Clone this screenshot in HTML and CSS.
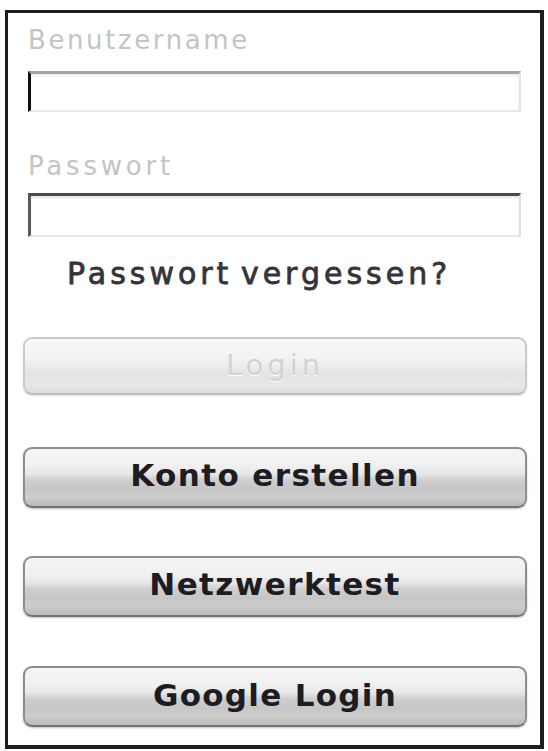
FILE: index.html
```html
<!DOCTYPE html>
<html lang="de">
<head>
<meta charset="utf-8">
<title>Login</title>
<link rel="stylesheet" href="styles.css">
</head>
<body>
<div class="panel">
  <div class="label">Benutzername</div>
  <input class="field field-user" type="text">
  <div class="label label-pass">Passwort</div>
  <input class="field field-pass" type="password">
  <div class="forgot">Passwort vergessen?</div>
  <button class="btn btn-disabled" type="button" disabled>Login</button>
  <button class="btn btn-create" type="button">Konto erstellen</button>
  <button class="btn btn-net" type="button">Netzwerktest</button>
  <button class="btn btn-google" type="button">Google Login</button>
</div>
</body>
</html>
```

FILE: styles.css
```css
html, body {
  margin: 0;
  padding: 0;
  background: #ffffff;
}

body {
  font-family: "DejaVu Sans", "Liberation Sans", sans-serif;
}

.panel {
  box-sizing: border-box;
  width: 539px;
  height: 739px;
  margin: 10px 0 0 5px;
  border: 3px solid #1e1e1e;
  border-right-width: 4px;
  border-bottom-width: 4px;
  padding-top: 12px;
  display: flex;
  flex-direction: column;
  background: #ffffff;
}

.label {
  margin-left: 20px;
  font-size: 26px;
  line-height: 30px;
  letter-spacing: 2.6px;
  color: #c4c4c4;
}

.label-pass {
  margin-top: 39px;
  letter-spacing: 3.8px;
}

.field {
  -webkit-appearance: none;
  appearance: none;
  display: block;
  box-sizing: border-box;
  margin: 0 20px;
  width: 493px;
  padding: 0;
  background: #ffffff;
  outline: none;
}

.field-user {
  margin-top: 16px;
  height: 41px;
  border-top: 3px solid #a4a4a4;
  border-left: 3px solid #111111;
  border-right: 2px solid #e4e4e4;
  border-bottom: 2px solid #e8e8e8;
  box-shadow: inset 0 2px 2px rgba(0, 0, 0, 0.08);
}

.field-pass {
  margin-top: 12px;
  height: 44px;
  border-top: 3px solid #4a4a4a;
  border-left: 3px solid #5a5a5a;
  border-right: 2px solid #e2e2e2;
  border-bottom: 2px solid #e6e6e6;
  box-shadow: inset 0 2px 2px rgba(0, 0, 0, 0.1);
}

.forgot {
  margin: 20px 0 0 59px;
  font-size: 30px;
  line-height: 34px;
  letter-spacing: 4px;
  word-spacing: -5px;
  color: #34343a;
  -webkit-text-stroke: 0.8px #34343a;
  white-space: nowrap;
}

.btn {
  -webkit-appearance: none;
  appearance: none;
  box-sizing: border-box;
  display: flex;
  align-items: center;
  justify-content: center;
  margin: 0 14px 0 15px;
  width: 504px;
  padding: 0 0 6px 0;
  font-family: "DejaVu Sans", "Liberation Sans", sans-serif;
  font-weight: bold;
  font-size: 31px;
  line-height: 36px;
  letter-spacing: 1.4px;
  color: #1c1c22;
  border: 2px solid #8e8e8e;
  border-bottom-color: #737373;
  border-radius: 9px;
  background: linear-gradient(to bottom,
    #f5f5f5 0%,
    #f0f0f0 30%,
    #e6e6e6 44%,
    #cfcfcf 54%,
    #c6c6c6 70%,
    #cdcdcd 84%,
    #bababa 100%);
  box-shadow: 0 1px 2px rgba(0, 0, 0, 0.25);
}

.btn-disabled {
  margin-top: 46px;
  height: 58px;
  padding-bottom: 2px;
  font-weight: normal;
  font-size: 29px;
  letter-spacing: 4px;
  color: #d2d2d2;
  text-shadow: 0 1px 0 #ffffff;
  border: 2px solid #cbcbcb;
  border-bottom-color: #bdbdbd;
  background: linear-gradient(to bottom,
    #f8f8f8 0%,
    #f3f3f3 35%,
    #ececec 50%,
    #e3e3e3 65%,
    #e7e7e7 85%,
    #dcdcdc 100%);
  box-shadow: 0 1px 2px rgba(0, 0, 0, 0.12);
}

.btn-create {
  margin-top: 52px;
  height: 61px;
}

.btn-net {
  margin-top: 48px;
  height: 61px;
}

.btn-google {
  margin-top: 49px;
  height: 61px;
  letter-spacing: 1.3px;
  padding-bottom: 4px;
}
```
